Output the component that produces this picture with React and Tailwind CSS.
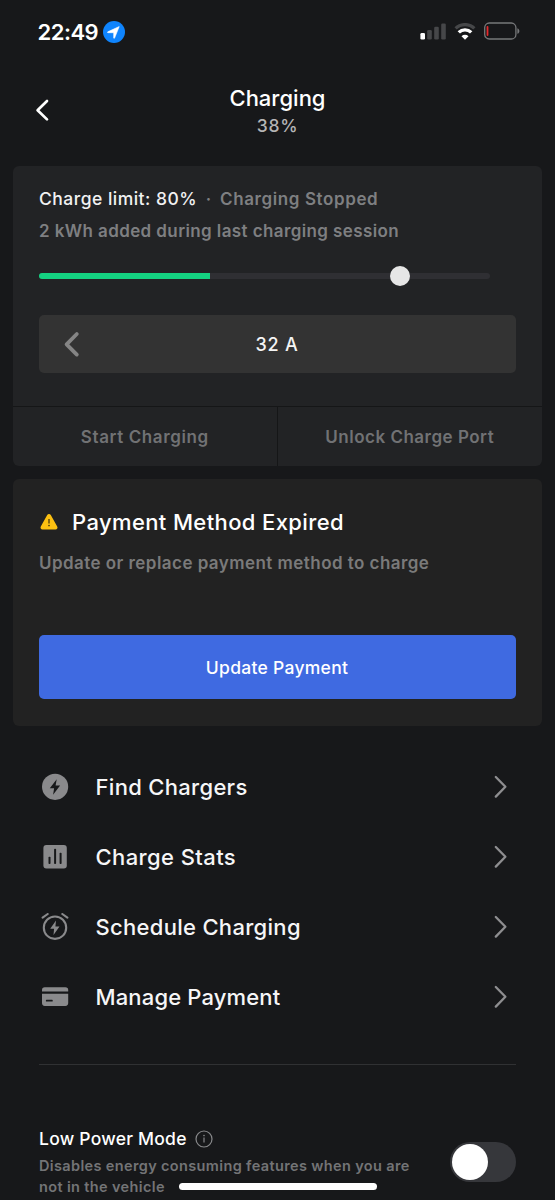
import React, { useState } from "react";

function StatusBar() {
  return (
    <div className="flex h-[62px] shrink-0 items-center justify-between pl-[37.5px] pr-[35px] pt-px">
      <div className="flex items-center gap-[4.5px]">
        <span className="text-[22px] font-semibold leading-7 tracking-[-0.5px] text-white">22:49</span>
        <svg width="22" height="22" viewBox="0 0 22 22">
          <circle cx="11" cy="11" r="11" fill="#0f84fd" />
          <path
            d="M16.2 5.6 11.6 17c-.2.5-.9.4-.9-.1v-5.2H5c-.6 0-.7-.7-.2-.9z"
            fill="#fff"
            stroke="#fff"
            strokeWidth="0.6"
            strokeLinejoin="round"
          />
        </svg>
      </div>
      <div className="flex items-center gap-2 pb-px">
        <svg width="26" height="17" viewBox="0 0 26 17">
          <rect x="0.4" y="10" width="4.6" height="6.6" rx="1.3" fill="#fff" />
          <rect x="7.2" y="7" width="4.6" height="9.6" rx="1.3" fill="#464749" />
          <rect x="14.2" y="3.8" width="4.6" height="12.8" rx="1.3" fill="#464749" />
          <rect x="21.2" y="0.4" width="4.6" height="16.2" rx="1.3" fill="#464749" />
        </svg>
        <svg width="22" height="17" viewBox="0 0 22 17" fill="none">
          <path d="M1.6 5.4a13.4 13.4 0 0 1 18.8 0" stroke="#464749" strokeWidth="3.2" />
          <path d="M4.8 9.4a8.8 8.8 0 0 1 12.4 0" stroke="#fff" strokeWidth="3.4" />
          <path d="M11 16.8 7.5 13.2a5 5 0 0 1 7 0z" fill="#fff" />
        </svg>
        <svg width="36" height="18" viewBox="0 0 36 18" fill="none">
          <rect x="0.7" y="1" width="31.2" height="16" rx="4.6" stroke="#77787a" strokeWidth="1.3" />
          <path d="M33.4 6.2c2.6.9 2.6 4.7 0 5.6z" fill="#77787a" />
          <rect x="2.6" y="4" width="1.8" height="10" rx="0.9" fill="#e5282c" />
        </svg>
      </div>
    </div>
  );
}

function Header() {
  return (
    <header className="grid h-[104px] shrink-0 grid-cols-[80px_1fr_80px] pt-[22px]">
      <button className="ml-[33px] mt-[14px] h-6 w-[18px]">
        <svg width="18" height="24" viewBox="0 0 18 24" fill="none">
          <path
            d="M14 3 4.6 12.2 14 21.4"
            stroke="#fff"
            strokeWidth="2.7"
            strokeLinecap="round"
            strokeLinejoin="round"
          />
        </svg>
      </button>
      <div className="text-center">
        <h1 className="text-[22px] font-medium leading-7 text-white">Charging</h1>
        <p className="text-[17.5px] font-medium leading-7 tracking-[0.7px] text-[#b5b5b6]">38%</p>
      </div>
    </header>
  );
}

function ChargeCard() {
  return (
    <section className="mx-[13px] shrink-0 rounded-md bg-[#222325]">
      <div className="h-60 px-[26px] pt-[17px]">
        <p className="flex text-[17px] leading-8 text-[#7e7f81]">
          <span className="text-[17.5px] font-medium tracking-[0.48px] text-[#f1f1f2]">Charge limit: 80%</span>
          <span className="w-[23px] text-center font-semibold">·</span>
          <span className="font-semibold tracking-[0.6px]">Charging Stopped</span>
        </p>
        <p className="text-[17px] font-semibold leading-8 tracking-[0.4px] text-[#7e7f81]">
          2 kWh added during last charging session
        </p>
        <div className="relative mt-[19px] flex h-5 w-[451px] items-center">
          <div className="h-[6.5px] w-full overflow-hidden rounded-[3px] bg-[#2f2f33]">
            <div className="h-full w-[171px] bg-[#14d281]" />
          </div>
          <div className="absolute left-[350.5px] top-0 size-5 rounded-full bg-[#e6e6e6]" />
        </div>
        <div className="mt-[29px] grid h-[58px] w-[477px] grid-cols-[66px_1fr_66px] items-center rounded-[5px] bg-[#333333]">
          <svg width="66" height="30" viewBox="0 0 66 30" fill="none">
            <path
              d="M37.8 5 27.6 15.3 37.8 25.6"
              stroke="#858585"
              strokeWidth="3.8"
              strokeLinecap="round"
              strokeLinejoin="round"
            />
          </svg>
          <p className="pr-px pt-px text-center text-[18px] font-medium leading-7 tracking-[0.8px] text-[#f4f4f4]">
            32 A
          </p>
        </div>
      </div>
      <div className="grid h-[60px] grid-cols-2 border-t border-[#151617] text-[17px] font-semibold text-[#717274]">
        <button className="border-r border-[#151617] pt-[3px] tracking-[0.6px]">Start Charging</button>
        <button className="pt-[3px] tracking-[0.5px]">Unlock Charge Port</button>
      </div>
    </section>
  );
}

function PaymentCard() {
  return (
    <section className="mx-[13px] mt-[13px] h-[247px] shrink-0 rounded-md bg-[#222222] px-[26px] pt-[27px]">
      <div className="flex items-center">
        <svg width="20" height="18" viewBox="0 0 20 18">
          <path
            d="M8.2 2.1c.8-1.4 2.8-1.4 3.6 0l6.4 11.3c.8 1.4-.1 3-1.7 3h-13c-1.6 0-2.5-1.6-1.7-3z"
            fill="#fcc011"
          />
          <path d="M10 6v4.6" stroke="#3a3010" strokeWidth="1.2" />
          <circle cx="10" cy="12.6" r="0.8" fill="#3a3010" />
        </svg>
        <h2 className="ml-[13px] text-[22px] font-medium leading-8 tracking-[0.38px] text-white">
          Payment Method Expired
        </h2>
      </div>
      <p className="mt-[13px] text-[17px] font-semibold leading-6 tracking-[0.45px] text-[#7a7a7a]">
        Update or replace payment method to charge
      </p>
      <button className="mt-[60px] h-16 w-[477px] rounded-[5px] bg-[#3f6ae1] pr-px pt-0.5 text-[17.5px] font-medium tracking-[0.28px] text-white">
        Update Payment
      </button>
    </section>
  );
}

function BoltIcon() {
  return (
    <svg width="28" height="28" viewBox="0 0 28 28">
      <circle cx="14.1" cy="13.8" r="13.1" fill="#8a8a8c" />
      <path d="M15.7 6.2 8.8 15.3h4.3l-1 6.5 7-9.2h-4.5z" fill="#17181a" />
    </svg>
  );
}

function StatsIcon() {
  return (
    <svg width="28" height="28" viewBox="0 0 28 28">
      <rect x="2.4" y="1.9" width="23.4" height="23.6" rx="3" fill="#8a8a8c" />
      <g fill="#17181a">
        <rect x="7.5" y="13.7" width="2" height="7.3" rx="0.8" />
        <rect x="13.1" y="5.7" width="2" height="15.3" rx="0.8" />
        <rect x="18.6" y="9.7" width="2" height="11.3" rx="0.8" />
      </g>
    </svg>
  );
}

function AlarmIcon() {
  return (
    <svg width="28" height="28" viewBox="0 0 28 28" fill="none">
      <circle cx="14" cy="14.7" r="11.2" stroke="#8a8a8c" strokeWidth="2.1" />
      <path d="M1.6 4.7 6.7 1M26.4 4.7 21.3 1" stroke="#8a8a8c" strokeWidth="2.1" strokeLinecap="round" />
      <path d="M15 7.5 9.2 15.8h3.9l-.6 6.2 6-8.5h-4.1z" fill="#8a8a8c" />
    </svg>
  );
}

function CardIcon() {
  return (
    <svg width="28" height="28" viewBox="0 0 28 28" fill="#8a8a8c">
      <path d="M1 8.5V7a2.8 2.8 0 0 1 2.8-2.8h20.6A2.8 2.8 0 0 1 27.2 7v1.5z" />
      <path d="M1 10.7h26.2v9.4a2.8 2.8 0 0 1-2.8 2.8H3.8A2.8 2.8 0 0 1 1 20.1z" />
      <rect x="4.9" y="16.7" width="6.8" height="1.9" rx="0.6" fill="#17181a" />
    </svg>
  );
}

const links = [
  { label: "Find Chargers", icon: BoltIcon, spacing: "tracking-[0.31px]" },
  { label: "Charge Stats", icon: StatsIcon, spacing: "tracking-[0.4px]" },
  { label: "Schedule Charging", icon: AlarmIcon, spacing: "tracking-[0.3px]" },
  { label: "Manage Payment", icon: CardIcon, spacing: "tracking-[0.15px]" },
];

function Links() {
  return (
    <ul className="mt-[26px] shrink-0 pl-[40.5px] pr-[47px]">
      {links.map(({ label, icon: Icon, spacing }) => (
        <li key={label} className="flex h-[70px] items-center">
          <Icon />
          <span className={`ml-[27px] flex-1 text-[22px] font-medium text-[#f6f6f7] ${spacing}`}>{label}</span>
          <svg width="14" height="24" viewBox="0 0 14 24" fill="none">
            <path
              d="M1.8 2 11.4 11.8 1.8 21.6"
              stroke="#8e8e90"
              strokeWidth="2.3"
              strokeLinecap="round"
              strokeLinejoin="round"
            />
          </svg>
        </li>
      ))}
    </ul>
  );
}

function LowPower() {
  const [on, setOn] = useState(false);
  return (
    <section className="mx-[39px] mt-8 flex shrink-0 justify-between border-t border-[#303133] pt-[62px]">
      <div>
        <div className="flex items-center gap-2">
          <h3 className="text-[17.5px] font-medium leading-6 tracking-[0.24px] text-white">Low Power Mode</h3>
          <svg width="18" height="18" viewBox="0 0 18 18" fill="none">
            <circle cx="9" cy="9" r="8" stroke="#88898b" strokeWidth="1.2" />
            <path d="M9 7.6v5" stroke="#88898b" strokeWidth="1.2" />
            <circle cx="9" cy="5.6" r="0.8" fill="#88898b" />
          </svg>
        </div>
        <p className="mt-[3.5px] w-[385px] text-[14.5px] font-semibold leading-[21px] tracking-[0.36px] text-[#737476]">
          Disables energy consuming features when you are not in the vehicle
        </p>
      </div>
      <button
        onClick={() => setOn(!on)}
        className={`mt-[15px] flex h-10 w-[66px] items-center rounded-full bg-[#36373b] px-0.5 ${on ? "justify-end" : "justify-start"}`}
      >
        <span className="size-9 rounded-full bg-white" />
      </button>
    </section>
  );
}

export default function App() {
  return (
    <div className="relative flex h-[1200px] w-[555px] flex-col overflow-hidden bg-[#17181a] font-['Inter',sans-serif]">
      <StatusBar />
      <Header />
      <ChargeCard />
      <PaymentCard />
      <Links />
      <LowPower />
      <div className="absolute bottom-[10.5px] left-[178.5px] h-[6.5px] w-[198.5px] rounded-full bg-white" />
    </div>
  );
}
